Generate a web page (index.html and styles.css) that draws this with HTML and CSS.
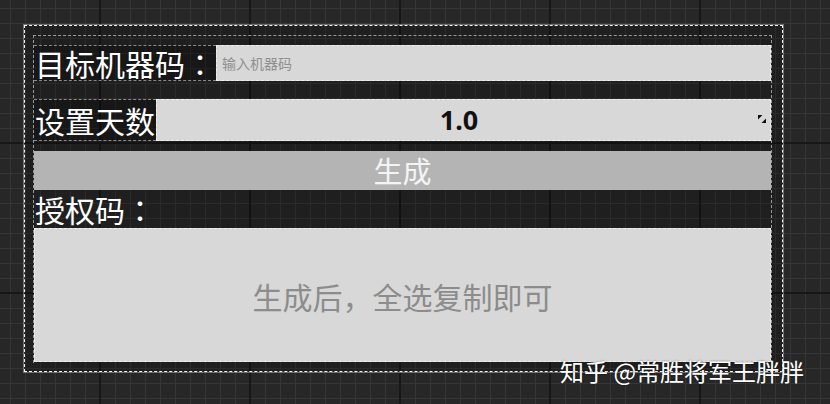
FILE: index.html
```html
<!DOCTYPE html>
<html lang="zh-CN">
<head>
<meta charset="utf-8">
<title>授权码生成</title>
<link rel="stylesheet" href="styles.css">
</head>
<body>
<div class="frame">
  <div class="panel">
    <div class="row row-machine">
      <div class="label label-machine">目标机器码<span class="punct">：</span></div>
      <div class="input"><span class="placeholder">输入机器码</span></div>
    </div>
    <div class="row row-days">
      <div class="label label-days">设置天数</div>
      <div class="spin">
        <span class="spin-value">1.0</span>
        <svg class="spin-grip" width="8" height="8" viewBox="0 0 8 8"><path d="M0 0H4.5L0 4.5Z M8 8H3.5L8 3.5Z" fill="#111"/></svg>
      </div>
    </div>
    <div class="button">生成</div>
    <div class="label label-code">授权码<span class="punct">：</span></div>
    <div class="textarea"><span class="ta-placeholder">生成后，全选复制即可</span></div>
  </div>
</div>
<div class="watermark">知乎 @常胜将军王胖胖</div>
</body>
</html>
```

FILE: styles.css
```css
html, body {
  margin: 0;
  padding: 0;
}
body {
  width: 830px;
  height: 404px;
  overflow: hidden;
  position: relative;
  font-family: "Noto Sans CJK SC", "Noto Sans", sans-serif;
  background-color: #272727;
  background-image:
    linear-gradient(to right, #171717 2px, transparent 2px),
    linear-gradient(to bottom, #171717 2px, transparent 2px),
    linear-gradient(to right, #363636 1px, transparent 1px),
    linear-gradient(to bottom, #363636 1px, transparent 1px);
  background-size: 150px 100%, 100% 150px, 15px 100%, 100% 15px;
  background-position: 99px 0, 0 142px, 10px 0, 0 8px;
  padding-top: 25px;
  padding-left: 24px;
  box-sizing: border-box;
}
.punct {
  font-family: "Noto Sans CJK TC", "Noto Sans CJK SC", sans-serif;
}
.frame {
  width: 759px;
  height: 347px;
  box-sizing: border-box;
  border: 1px dashed #f2f2f2;
  outline: 1px solid rgba(255,255,255,0.35);
  background: rgba(0,0,0,0.2);
  padding: 9px 0 0 8px;
}
.panel {
  width: 739px;
  height: 328px;
  box-sizing: border-box;
  border-top: 1px dashed #9a9a9a;
  border-left: 1px dashed #9a9a9a;
  border-right: 1px dashed #9a9a9a;
  padding-top: 9px;
  display: flex;
  flex-direction: column;
}
.row {
  display: flex;
  align-items: stretch;
}
.row-machine {
  height: 36px;
}
.row-days {
  height: 42px;
  margin-top: 18px;
}
.label {
  color: #ffffff;
  font-size: 30px;
  white-space: nowrap;
  box-sizing: border-box;
  border-top: 1px dashed #8a8a8a;
  border-bottom: 1px dashed #8a8a8a;
  background: rgba(0,0,0,0.25);
  display: flex;
  align-items: center;
}
.label-machine {
  width: 182px;
  padding-left: 1px;
  line-height: 34px;
}
.label-days {
  width: 122px;
  padding-left: 1px;
  line-height: 40px;
}
.input {
  flex: 1;
  background: #d8d8d8;
  box-sizing: border-box;
  border: 1px dashed #f0f0f0;
  display: flex;
  align-items: center;
  padding-left: 5px;
}
.placeholder {
  color: #8f8f8f;
  font-size: 14px;
}
.spin {
  flex: 1;
  position: relative;
  background: #d8d8d8;
  box-sizing: border-box;
  border: 1px dashed #f0f0f0;
  display: flex;
  align-items: center;
  justify-content: center;
}
.spin-value {
  font-family: "Noto Sans", sans-serif;
  font-weight: bold;
  font-size: 27px;
  color: #111111;
  line-height: 40px;
  margin-right: 9px;
}
.spin-grip {
  position: absolute;
  right: 4px;
  top: 15px;
}
.button {
  margin-top: 10px;
  height: 39px;
  background: #b4b4b4;
  color: #f4f4f4;
  font-size: 29px;
  line-height: 39px;
  text-align: center;
}
.label-code {
  height: 38px;
  width: 120px;
  border: none;
  background: transparent;
  line-height: 38px;
  padding-left: 1px;
}
.textarea {
  height: 134px;
  background: #d8d8d8;
  box-sizing: border-box;
  border: 1px dashed #f0f0f0;
  display: flex;
  align-items: center;
  justify-content: center;
}
.ta-placeholder {
  color: #8c8c8c;
  font-size: 30px;
  margin-top: 1px;
}
.watermark {
  position: absolute;
  left: 560px;
  top: 355px;
  font-size: 24px;
  line-height: 32px;
  color: #ffffff;
  white-space: nowrap;
  text-shadow: 0 0 2px rgba(0,0,0,0.6);
}
```
